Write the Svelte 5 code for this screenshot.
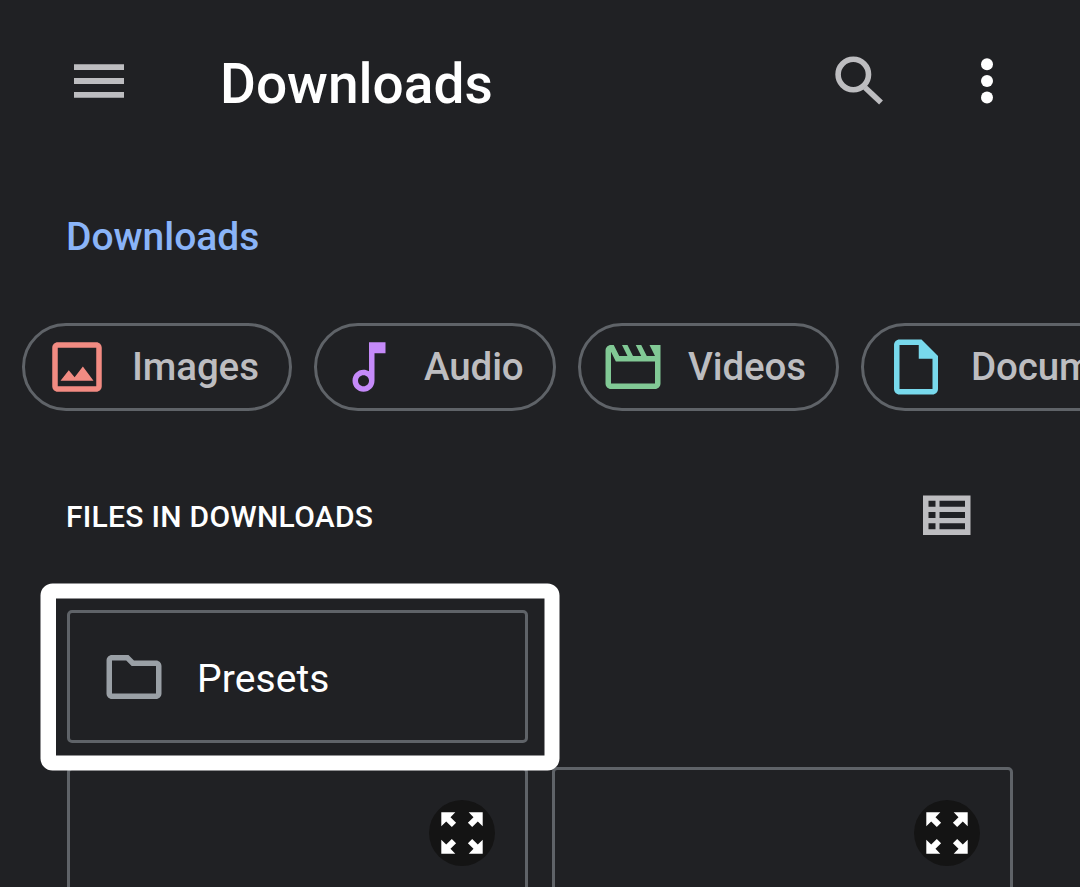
<script>
  const chips = [
    { label: 'Images', color: '#f28b82', d: 'M19 5v14H5V5h14m0-2H5c-1.1 0-2 .9-2 2v14c0 1.1.9 2 2 2h14c1.1 0 2-.9 2-2V5c0-1.1-.9-2-2-2zm-4.86 8.86l-3 3.87L9 13.14 6 17h12l-3.86-5.14z' },
    { label: 'Audio', color: '#c58af9', d: 'M12 3l.01 10.55c-.59-.34-1.27-.55-2-.55C7.79 13 6 14.79 6 17s1.79 4 4.01 4S14 19.21 14 17V7h4V3h-6zm-1.99 16c-1.1 0-2-.9-2-2s.9-2 2-2 2 .9 2 2-.9 2-2 2z' },
    { label: 'Videos', color: '#81c995', d: 'M4 6.47L5.76 10H20v8H4V6.47M22 4h-4l2 4h-3l-2-4h-2l2 4h-3l-2-4H8l2 4H7L5 4H4c-1.1 0-1.99.9-1.99 2L2 18c0 1.1.9 2 2 2h16c1.1 0 2-.9 2-2V4z' },
    { label: 'Documents', color: '#78d9ec', d: 'M14 2H6c-1.1 0-1.99.9-1.99 2L4 20c0 1.1.89 2 1.99 2H18c1.1 0 2-.9 2-2V8l-6-6zM6 20V4h7v5h5v11H6z' }
  ];
  const arrow = 'M-20.7-20.7h14l-4.8 4.9 5.6 5.6-4.3 4.3-5.6-5.6-4.9 4.8z';
</script>

<main>
  <header>
    <svg class="menu" viewBox="0 0 50 34" aria-hidden="true">
      <path d="M0 .2h50v5.8H0zM0 14h50v6H0zM0 28h50v5.8H0z" />
    </svg>
    <h1>Downloads</h1>
    <svg class="search" viewBox="0 0 50 50" aria-hidden="true">
      <circle cx="18.3" cy="18.5" r="15.2" />
      <path d="M30 31.5L46 46.5" />
    </svg>
    <svg class="more" viewBox="0 0 14 46" aria-hidden="true">
      <circle cx="7" cy="6.3" r="6" />
      <circle cx="7" cy="23" r="6" />
      <circle cx="7" cy="39.6" r="6" />
    </svg>
  </header>

  <nav>Downloads</nav>

  <div class="chips">
    {#each chips as chip}
      <button>
        <svg viewBox="0 0 24 24" fill={chip.color} aria-hidden="true"><path d={chip.d} /></svg>
        <span>{chip.label}</span>
      </button>
    {/each}
  </div>

  <section class="heading">
    <h2>FILES IN DOWNLOADS</h2>
    <svg viewBox="0 0 48 40" aria-hidden="true">
      <path fill-rule="evenodd" d="M0 .5h47.5V40H0zM5.5 5.7v6h7v-6zm11 0v6H42v-6zm-11 11.3v6h7v-6zm11 0v6H42v-6zm-11 11.2v6h7v-6zm11 0v6H42v-6z" />
    </svg>
  </section>

  <div class="files">
    <div class="folder">
      <svg class="icon" viewBox="0 0 24 24" aria-hidden="true">
        <path d="M9.17 6l2 2H20v10H4V6h5.17M10 4H4c-1.1 0-1.99.9-1.99 2L2 18c0 1.1.9 2 2 2h16c1.1 0 2-.9 2-2V8c0-1.1-.9-2-2-2h-8l-2-2z" />
      </svg>
      <span>Presets</span>
      <svg class="highlight" viewBox="0 0 520 188" aria-hidden="true">
        <path fill-rule="evenodd" d="M12.5.5h495a12 12 0 0 1 12 12v163a12 12 0 0 1-12 12h-495a12 12 0 0 1-12-12v-163a12 12 0 0 1 12-12zM16 15.5v157h488.5v-157z" />
      </svg>
    </div>
    {#each [0, 1] as slot (slot)}
      <div class="file">
        <svg viewBox="-33 -33 66 66" aria-hidden="true">
          <circle r="33" />
          {#each [0, 90, 180, 270] as turn}
            <path d={arrow} transform="rotate({turn})" />
          {/each}
        </svg>
      </div>
    {/each}
  </div>
</main>

<style>
  :global(body) {
    margin: 0;
    background: #202124;
    overflow: hidden;
  }
  main {
    width: 1080px;
    height: 887px;
    overflow: hidden;
    background: #202124;
    color: #fff;
    font-family: Roboto, sans-serif;
    display: flex;
    flex-direction: column;
  }
  svg {
    display: block;
    flex: none;
  }
  h1, h2 {
    margin: 0;
    font-weight: 500;
  }
  header {
    height: 162px;
    flex: none;
    box-sizing: border-box;
    padding: 0 86px 0 74px;
    display: flex;
    align-items: center;
  }
  .menu {
    width: 50px;
    height: 34px;
    fill: #bdbdc0;
  }
  h1 {
    flex: 1;
    padding: 6px 0 0 96px;
    font-size: 55px;
    line-height: 66px;
  }
  .search {
    width: 50px;
    height: 50px;
    margin-right: 95px;
    fill: none;
    stroke: #bdbdc0;
    stroke-width: 5.6;
  }
  .more {
    width: 14px;
    height: 46px;
    fill: #fff;
  }
  nav {
    height: 150px;
    flex: none;
    padding-left: 66px;
    color: #8ab4f8;
    font-size: 39px;
    font-weight: 500;
    line-height: 150px;
  }
  .chips {
    flex: none;
    margin-top: 11px;
    padding-left: 22px;
    display: grid;
    grid-template-columns: 270px 242px 261px 340px;
    gap: 22px;
  }
  button {
    height: 88px;
    box-sizing: border-box;
    padding: 0 0 0 19px;
    border: 3px solid #5f6368;
    border-radius: 44px;
    background: none;
    color: #bdbdc0;
    font: 500 38.5px/60px Roboto, sans-serif;
    letter-spacing: -0.1px;
    display: flex;
    align-items: center;
    gap: 22px;
  }
  button svg {
    width: 66px;
    height: 66px;
  }
  .heading {
    height: 199px;
    flex: none;
    box-sizing: border-box;
    padding: 9px 109px 0 66px;
    display: flex;
    align-items: center;
    justify-content: space-between;
  }
  h2 {
    font-size: 30px;
    line-height: 40px;
    letter-spacing: 0.28px;
    padding-top: 3px;
  }
  .heading svg {
    width: 48px;
    height: 40px;
    fill: #bdbdc0;
  }
  .files {
    padding-left: 67px;
    display: grid;
    grid-template-columns: 461px 461px;
    grid-template-rows: 133px 200px;
    gap: 24px;
  }
  .folder, .file {
    box-sizing: border-box;
    border: 3px solid #5f6368;
    border-radius: 5px;
  }
  .folder {
    grid-column: 1;
    position: relative;
    padding-left: 31px;
    display: flex;
    align-items: center;
    gap: 30px;
    font-size: 39px;
    line-height: 60px;
  }
  .folder span {
    padding-top: 4px;
    letter-spacing: 0.1px;
  }
  .icon {
    width: 66px;
    height: 66px;
    fill: #9aa0a6;
  }
  .highlight {
    position: absolute;
    left: -30px;
    top: -30px;
    width: 520px;
    height: 188px;
    fill: #fff;
    z-index: 1;
  }
  .file {
    grid-row: 2;
    padding: 30px 30px 0 0;
    display: flex;
    justify-content: flex-end;
    align-items: flex-start;
  }
  .file svg {
    width: 66px;
    height: 66px;
    fill: #fff;
  }
  .file circle {
    fill: #141414;
  }
</style>
